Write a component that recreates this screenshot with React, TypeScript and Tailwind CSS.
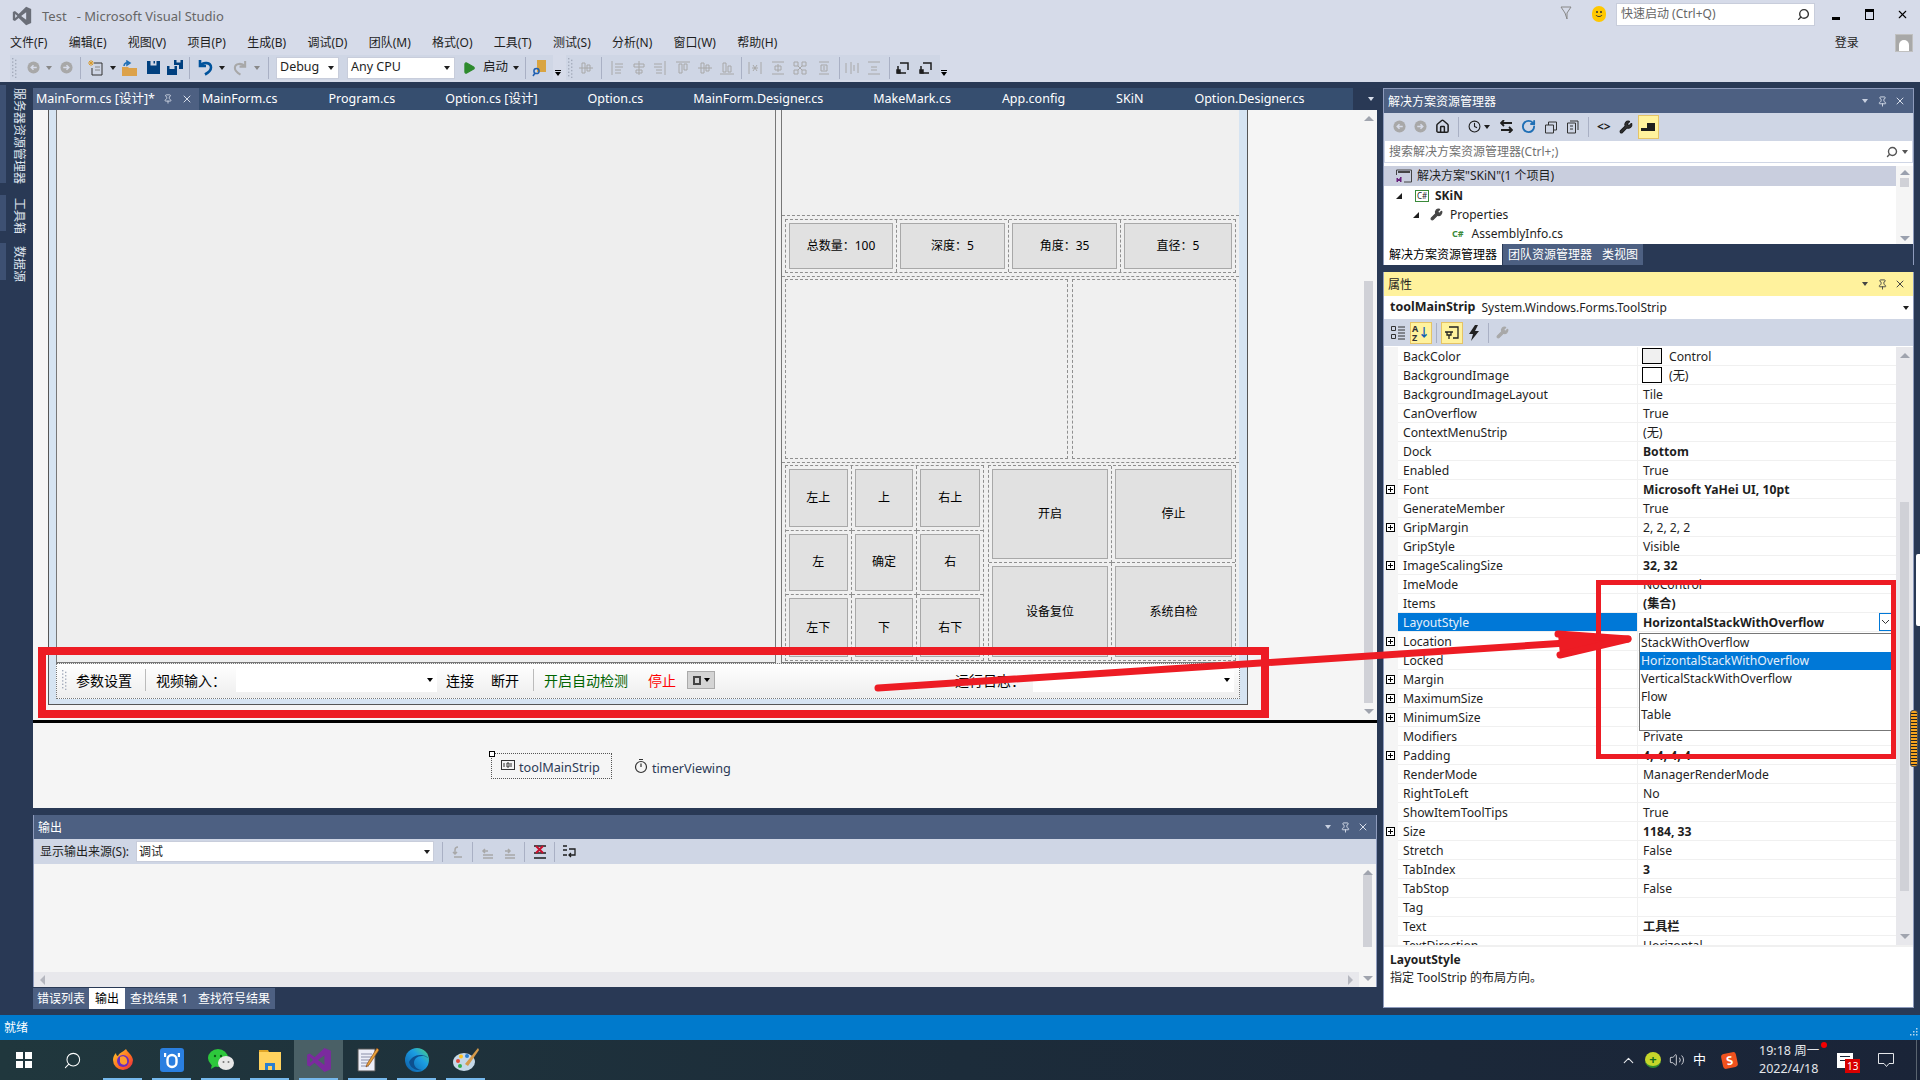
import React from "react";
import { Search, ChevronUp, Volume2, Home, Wrench, RotateCw, Clock, Play, Pin, X } from "lucide-react";

const Tri = ({ c = "border-t-[#1e1e1e]" }: { c?: string }) => (
  <span className={`inline-block w-0 h-0 border-x-[3px] border-x-transparent border-t-[4px] ${c}`} />
);

const VsLogo = ({ fill, size }: { fill: string; size: number }) => (
  <svg width={size} height={size} viewBox="0 0 24 24">
    <path fillRule="evenodd" fill={fill} d="M17 1 L8 9.5 L3.5 6 L1 7.2 V16.8 L3.5 18 L8 14.5 L17 23 L23 20.5 V3.5 Z M17 7.5 V16.5 L11 12 Z M3.8 9.5 L6.5 12 L3.8 14.5 Z" />
  </svg>
);

const Circ = ({ dir, c = "#a8a8a8" }: { dir: "l" | "r"; c?: string }) => (
  <svg width="13" height="13" viewBox="0 0 14 14">
    <circle cx="7" cy="7" r="6.5" fill={c} />
    <path d={dir === "l" ? "M10.5 7H5M7 4.5 4.5 7 7 9.5" : "M3.5 7H9M7 4.5 9.5 7 7 9.5"} stroke="#d6dbe9" strokeWidth="1.6" fill="none" />
  </svg>
);

const Grip = () => (
  <svg width="5" height="20" viewBox="0 0 5 20" fill="#a4abbb">
    {[0, 1, 2, 3, 4, 5].map((i) => (
      <g key={i}>
        <rect x="0" y={i * 3.4} width="1.4" height="1.4" />
        <rect x="3" y={i * 3.4 + 1.7} width="1.4" height="1.4" />
      </g>
    ))}
  </svg>
);

const Div = () => <span className="w-px h-[22px] bg-[#a9b0c4]" />;

const Cell = ({ w, children }: { w: string; children?: React.ReactNode }) => (
  <span className={`${w} h-full flex items-center justify-center shrink-0`}>{children}</span>
);

const Floppy = () => (
  <svg width="13" height="13" viewBox="0 0 13 13">
    <path fillRule="evenodd" fill="#00407f" d="M0 0h13v13H0zM3.5 0v4.500h6V0h-1.500v2.500H6.500V0z" />
  </svg>
);

const FloppyAll = () => (
  <svg width="16" height="15" viewBox="0 0 16 15">
    <path fillRule="evenodd" fill="#00407f" d="M7 0h9v9h-4V5H7zM9.500 0v2.500h4V0zM0 6h10v9H0zM2.500 6v3h5V6z" />
  </svg>
);

const Align = ({ v }: { v: number }) => (
  <svg width="16" height="16" viewBox="0 0 16 16" stroke="#a8a8a8" strokeWidth="1" fill="none">
    {v === 0 && <path d="M3 1v14M6 4h8M6 7h8M6 10h6M6 13h6" />}
    {v === 1 && <path d="M8 1v14M3 4h10v3H3zM5 10h6v3H5z" />}
    {v === 2 && <path d="M13 1v14M2 4h8M2 7h8M4 10h6M4 13h6" />}
    {v === 3 && <path d="M1 2h14M4 4v9h3V4zM9 4v6h3V4z" />}
    {v === 4 && <path d="M1 8h14M4 3v10h3V3zM9 5v6h3V5z" />}
    {v === 5 && <path d="M1 14h14M4 3v9h3V3zM9 6v6h3V6z" />}
    {v === 6 && <path d="M2 2v12M14 2v12M5 8h6M6 5l4 6M10 5l-4 6" />}
    {v === 7 && <path d="M2 2h12M2 14h12M8 4v8M5 6h6v4H5z" />}
    {v === 8 && <path d="M2 2h4v4H2zM10 2h4v4h-4zM2 10h4v4H2zM10 10h4v4h-4zM6 6l4 4M10 6l-4 4" />}
    {v === 9 && <path d="M3 2h10M3 14h10M5 5h6v6H5zM8 6v4" />}
    {v === 10 && <path d="M2 3v10M14 3v10M7 2v12M10 5v6" />}
    {v === 11 && <path d="M2 2h12M2 14h12M5 7h6M5 10h6" />}
  </svg>
);

const Overflow = () => (
  <span className="mt-[16px] flex flex-col items-center gap-px">
    <span className="w-[6px] h-px bg-black" />
    <Tri c="border-t-black" />
  </span>
);

const TopBar = () => (
  <div className="h-[82px] bg-[#d6dbe9] flex flex-col shrink-0">
    <div className="h-[32px] flex items-center">
      <span className="ml-[12px]">
        <VsLogo fill="#6a6e78" size={20} />
      </span>
      <span className="ml-[10px] mt-px text-[13px] text-[#666] whitespace-pre">Test   - Microsoft Visual Studio</span>
      <div className="ml-auto flex items-center -mt-[4px]">
        <svg width="12" height="14" viewBox="0 0 12 14" fill="none" stroke="#888" className="-mt-[3px]">
          <path d="M1 1h10L7 7v6L5 7z" />
        </svg>
        <span className="ml-[20px] w-[14px] h-[16px] rounded-full bg-[#ffc800] flex items-center justify-center">
          <svg width="10" height="10" viewBox="0 0 10 10" fill="none" stroke="#333">
            <circle cx="3" cy="3" r=".6" fill="#333" />
            <circle cx="7" cy="3" r=".6" fill="#333" />
            <path d="M2 6c1 2 5 2 6 0" />
          </svg>
        </span>
        <div className="ml-[10px] w-[199px] h-[23px] bg-white border border-[#c8cddb] flex items-center text-[12px] text-[#666] pl-[4px] pr-[4px]">
          <span>快速启动 (Ctrl+Q)</span>
          <Search size={13} strokeWidth={2.6} className="ml-auto -scale-x-100 text-[#333]" />
        </div>
        <span className="ml-[17px] w-[8px] h-[3px] mt-[8px] bg-black" />
        <span className="ml-[25px] w-[9px] h-[11px] border border-black border-t-[3px]" />
        <X size={13} strokeWidth={2} className="ml-[22px] mr-[11px] text-black" />
      </div>
    </div>
    <div className="h-[22px] flex items-center pl-[10px] gap-[21.25px] text-[12px] text-[#1e1e1e]">
      <span>文件(F)</span>
      <span>编辑(E)</span>
      <span>视图(V)</span>
      <span>项目(P)</span>
      <span>生成(B)</span>
      <span>调试(D)</span>
      <span>团队(M)</span>
      <span>格式(O)</span>
      <span>工具(T)</span>
      <span>测试(S)</span>
      <span>分析(N)</span>
      <span>窗口(W)</span>
      <span>帮助(H)</span>
      <span className="ml-auto mr-[15px]">登录</span>
      <span className="mr-[7px] w-[18px] h-[18px] bg-[#a8a8a8] flex items-end justify-center border border-[#c0c0c0]">
        <span className="w-[10px] h-[11px] bg-white rounded-t-[5px]" />
      </span>
    </div>
    <div className="h-[28px] flex items-start">
      <div className="ml-[10px] w-[543px] h-[25px] mt-px bg-[#cfd6e5] flex items-center overflow-hidden">
        <Cell w="w-[8px]"><Grip /></Cell>
        <span className="w-[7px] shrink-0" />
        <Cell w="w-[16px]"><Circ dir="l" /></Cell>
        <Cell w="w-[16px]"><Tri c="border-t-[#888]" /></Cell>
        <Cell w="w-[18px]"><Circ dir="r" /></Cell>
        <Cell w="w-[10px]"><Div /></Cell>
        <Cell w="w-[22px]">
          <svg width="16" height="16" viewBox="0 0 16 16" fill="none">
            <path d="M6 3h8v12H4V8" stroke="#333" />
            <path d="M3 0v6M0 3h6M1 1l4 4M5 1 1 5" stroke="#d99a2b" strokeWidth="1" />
            <path d="M7 7h5M7 10h5" stroke="#888" />
          </svg>
        </Cell>
        <Cell w="w-[12px]"><Tri /></Cell>
        <Cell w="w-[22px]">
          <svg width="16" height="16" viewBox="0 0 16 16">
            <path d="M0 7h6l1 1h8v8H0z" fill="#dca24a" />
            <path d="M2 6c0-3 3-4 5-3M5 1l3 2-3 2z" fill="none" stroke="#1f6fb5" strokeWidth="1.5" />
          </svg>
        </Cell>
        <Cell w="w-[24px]"><Floppy /></Cell>
        <Cell w="w-[20px]"><FloppyAll /></Cell>
        <Cell w="w-[8px]"><Div /></Cell>
        <Cell w="w-[24px]">
          <svg width="15" height="17" viewBox="0 0 15 17" fill="none" stroke="#00539c" strokeWidth="2.6">
            <path d="M2 1v6h6M2.5 6.5C5 3 13 3 13 8.5c0 3-2.500 5-6 7" />
          </svg>
        </Cell>
        <Cell w="w-[10px]"><Tri /></Cell>
        <Cell w="w-[26px]">
          <svg width="14" height="16" viewBox="0 0 15 17" fill="none" stroke="#a8a8a8" strokeWidth="2.2">
            <path d="M13 1v6H7M12.500 6.500C10 3 2 3 2 8.500c0 3 2.500 5 6 7" />
          </svg>
        </Cell>
        <Cell w="w-[8px]"><Tri c="border-t-[#888]" /></Cell>
        <Cell w="w-[14px]"><Div /></Cell>
        <div className="ml-px w-[63px] h-[22px] shrink-0 bg-white border border-[#c8cddb] flex items-center pl-[3px] pr-[4px] text-[12.5px] text-[#1e1e1e]">
          Debug<span className="ml-auto flex"><Tri /></span>
        </div>
        <div className="ml-[8px] w-[108px] h-[22px] shrink-0 bg-white border border-[#c8cddb] flex items-center pl-[3px] pr-[4px] text-[12.5px] text-[#1e1e1e]">
          Any CPU<span className="ml-auto flex"><Tri /></span>
        </div>
        <Cell w="w-[28px]"><Play size={14} fill="#2d8a2d" className="text-[#2d8a2d]" /></Cell>
        <span className="w-[25px] shrink-0 text-[12.5px] text-[#1e1e1e] whitespace-nowrap">启动</span>
        <Cell w="w-[16px]"><Tri /></Cell>
        <Cell w="w-[2px]"><Div /></Cell>
        <Cell w="w-[27px]">
          <svg width="16" height="18" viewBox="0 0 16 18">
            <path d="M5 1h9v12H5z" fill="#d9a441" />
            <circle cx="4.500" cy="12" r="2.600" fill="none" stroke="#1f5fb0" strokeWidth="1.500" />
            <path d="M3 14l-2 3" stroke="#1f5fb0" strokeWidth="1.500" />
          </svg>
        </Cell>
      </div>
      <span className="ml-[2px]"><Overflow /></span>
      <div className="ml-[5px] w-[374px] h-[25px] mt-px bg-[#cfd6e5] flex items-center overflow-hidden">
        <Cell w="w-[8px]"><Grip /></Cell>
        <Cell w="w-[24px]"><Align v={4} /></Cell>
        <Cell w="w-[6px]"><Div /></Cell>
        <Cell w="w-[26px]"><Align v={0} /></Cell>
        <Cell w="w-[18px]"><Align v={1} /></Cell>
        <Cell w="w-[24px]"><Align v={2} /></Cell>
        <Cell w="w-[22px]"><Align v={3} /></Cell>
        <Cell w="w-[22px]"><Align v={4} /></Cell>
        <Cell w="w-[22px]"><Align v={5} /></Cell>
        <Cell w="w-[6px]"><Div /></Cell>
        <Cell w="w-[22px]"><Align v={6} /></Cell>
        <Cell w="w-[24px]"><Align v={7} /></Cell>
        <Cell w="w-[20px]"><Align v={8} /></Cell>
        <Cell w="w-[28px]"><Align v={9} /></Cell>
        <Cell w="w-[2px]"><Div /></Cell>
        <Cell w="w-[24px]"><Align v={10} /></Cell>
        <Cell w="w-[20px]"><Align v={11} /></Cell>
        <Cell w="w-[10px]"><Div /></Cell>
        {["w-[18px]", "w-[28px]"].map((w) => (
          <Cell key={w} w={w}>
            <svg width="16" height="16" viewBox="0 0 16 16" fill="none" stroke="#1e1e1e" strokeWidth="1.5">
              <path d="M3 6V13H11M5 3H13V10" />
              <rect x="2" y="10" width="3" height="3" fill="#1e1e1e" />
            </svg>
          </Cell>
        ))}
      </div>
      <span className="ml-px"><Overflow /></span>
    </div>
  </div>
);

const PanelHead = ({ title, light }: { title: string; light?: boolean }) => (
  <div className={`h-[24px] shrink-0 flex items-center pl-[4px] text-[12px] ${light ? "bg-[#fff29d] text-[#1e1e1e]" : "bg-[#4d6082] text-white"}`}>
    <span className="mt-px">{title}</span>
    <span className="ml-auto flex">
      <Tri c={light ? "border-t-[#444]" : "border-t-[#c8d0e0]"} />
    </span>
    <Pin size={11} className={`ml-[9px] ${light ? "text-[#444]" : "text-[#d8deea]"}`} />
    <X size={12} className={`ml-[6px] mr-[7px] ${light ? "text-[#444]" : "text-[#d8deea]"}`} />
  </div>
);

const VScroll = ({ thumb, bg = "bg-[#f5f5f5]" }: { thumb?: string; bg?: string }) => (
  <div className={`w-[17px] shrink-0 ${bg} flex flex-col items-center pt-[6px] pb-[6px]`}>
    <span className="w-0 h-0 border-x-[5px] border-x-transparent border-b-[5px] border-b-[#a0a4ae]" />
    {thumb ? <span className={`w-[9px] bg-[#d0d1d7] ${thumb}`} /> : null}
    <span className="mt-auto w-0 h-0 border-x-[5px] border-x-transparent border-t-[5px] border-t-[#a0a4ae]" />
  </div>
);

const Btn = ({ children, className = "" }: { children?: React.ReactNode; className?: string }) => (
  <div className={`bg-[#e1e1e1] border border-[#a8a8a8] flex items-center justify-center text-[12px] text-black h-full ${className}`}>{children}</div>
);

const DCell = ({ children, className = "" }: { children?: React.ReactNode; className?: string }) => (
  <div className={`border-dashed border-[#8f8f8f] p-[3px] ${className}`}>{children}</div>
);

const ToolStrip = () => (
  <div className="h-[36px] shrink-0 bg-gradient-to-b from-white to-[#eeeeee] border border-dotted border-[#777] flex items-center pb-[2px] text-[14px] text-black">
    <span className="ml-[5px]"><Grip /></span>
    <span className="ml-[9px]">参数设置</span>
    <span className="ml-[13px] w-px h-[22px] bg-[#bbb]" />
    <span className="ml-[10px]">视频输入：</span>
    <div className="ml-[10px] w-[201px] h-[24px] bg-white flex items-center justify-end pr-[4px]"><Tri c="border-t-black" /></div>
    <span className="ml-[9px]">连接</span>
    <span className="ml-[17px]">断开</span>
    <span className="ml-[14px] w-px h-[22px] bg-[#bbb]" />
    <span className="ml-[10px] text-[#006400]">开启自动检测</span>
    <span className="ml-[20px] text-[#ff0000]">停止</span>
    <div className="ml-[11px] w-[28px] h-[18px] bg-[#d4d4d4] border border-[#aaa] flex items-center justify-center gap-[3px]">
      <span className="w-[8px] h-[9px] border-2 border-[#444]" />
      <Tri c="border-t-black" />
    </div>
    <span className="ml-[240px]">运行日志：</span>
    <div className="ml-[8px] w-[201px] h-[24px] bg-white flex items-center justify-end pr-[4px]"><Tri c="border-t-black" /></div>
  </div>
);

const FormRight = () => (
  <div className="w-[458px] h-full border-l border-b border-[#777] bg-[#f0f0f0] flex flex-col">
    <div className="h-[106px] border-b border-dashed border-[#8f8f8f]" />
    <div className="mt-[3px] mx-[3px] h-[54px] grid grid-cols-[111px_112px_112px_1fr] border border-dashed border-[#8f8f8f]">
      <DCell className="border-r"><Btn>总数量：100</Btn></DCell>
      <DCell className="border-r"><Btn>深度：5</Btn></DCell>
      <DCell className="border-r"><Btn>角度：35</Btn></DCell>
      <DCell><Btn>直径：5</Btn></DCell>
    </div>
    <div className="mt-[3px] border-t border-dashed border-[#8f8f8f]" />
    <div className="mt-[2px] mx-[3px] h-[180px] flex gap-[4px]">
      <div className="w-[283px] border border-dashed border-[#8f8f8f]" />
      <div className="flex-1 border border-dashed border-[#8f8f8f]" />
    </div>
    <div className="mt-[3px] border-t border-dashed border-[#8f8f8f]" />
    <div className="mt-[2px] mx-[3px] h-[196px] flex gap-[4px]">
      <div className="w-[199px] grid grid-cols-3 grid-rows-3 border border-dashed border-[#8f8f8f]">
        {["左上", "上", "右上", "左", "确定", "右", "左下", "下", "右下"].map((t, i) => (
          <DCell key={t} className={`${i % 3 < 2 ? "border-r" : ""} ${i < 6 ? "border-b" : ""}`}>
            <Btn>{t}</Btn>
          </DCell>
        ))}
      </div>
      <div className="flex-1 grid grid-cols-2 grid-rows-2 border border-dashed border-[#8f8f8f]">
        <DCell className="border-r border-b"><Btn>开启</Btn></DCell>
        <DCell className="border-b"><Btn>停止</Btn></DCell>
        <DCell className="border-r"><Btn>设备复位</Btn></DCell>
        <DCell><Btn>系统自检</Btn></DCell>
      </div>
    </div>
  </div>
);

const Designer = () => (
  <div className="h-[698px] shrink-0 bg-[#f5f5f5] flex flex-col">
    <div className="h-[610px] flex shrink-0 overflow-hidden">
      <div className="flex-1 pl-[15px]">
        <div className="w-[1200px] h-[595px] bg-[#d6e4f2] border-x border-b border-[#555] px-[7px] pb-[5px] flex flex-col">
          <div className="h-[553px] flex shrink-0">
            <div className="w-[720px] h-full bg-[#eeeeee] border-x border-b border-[#777]" />
            <div className="w-[5px] bg-[#f0f0f0]" />
            <FormRight />
          </div>
          <ToolStrip />
        </div>
      </div>
      <VScroll thumb="h-[422px] mt-[160px]" />
    </div>
    <div className="h-[3px] bg-black shrink-0" />
    <div className="flex-1 flex items-start pt-[30px] pl-[458px] text-[12.7px] text-[#2c3a55]">
      <div className="relative w-[121px] h-[26px] border border-dotted border-[#555] flex items-center pl-[9px] gap-[4px]">
        <span className="absolute -left-[3px] -top-[3px] w-[6px] h-[6px] bg-white border border-black" />
        <svg width="14" height="12" viewBox="0 0 14 12" fill="none" stroke="#333" className="-mt-[3px]">
          <rect x=".5" y="1.500" width="13" height="9" />
          <path d="M3 4v4M6 4h2v4H6zM10 4v4" />
        </svg>
        <span className="mt-[3px]">toolMainStrip</span>
      </div>
      <div className="ml-[22px] mt-[3px] flex items-center gap-[4px]">
        <svg width="14" height="16" viewBox="0 0 14 16" fill="none" stroke="#333" strokeWidth="1.200" className="-mt-[3px]">
          <circle cx="7" cy="9" r="5.500" />
          <path d="M7 5.500V9M5 1.500h4" />
        </svg>
        <span className="mt-[3px]">timerViewing</span>
      </div>
    </div>
  </div>
);

const OutIcon = ({ children }: { children: React.ReactNode }) => (
  <svg width="16" height="16" viewBox="0 0 16 16" fill="none" stroke="#a8a8a8" strokeWidth="1.500">{children}</svg>
);

const Output = () => (
  <div className="h-[172px] shrink-0 flex flex-col border-x border-[#8e9bbc]">
    <PanelHead title="输出" />
    <div className="h-[25px] shrink-0 bg-[#cfd6e5] flex items-center pl-[6px] text-[12px] text-[#1e1e1e]">
      <span>显示输出来源(S):</span>
      <div className="ml-[7px] w-[298px] h-[21px] bg-white border border-[#c8cddb] flex items-center pl-[2px] pr-[3px]">
        调试<span className="ml-auto flex"><Tri /></span>
      </div>
      <span className="ml-[8px] w-px h-[20px] bg-[#a9b0c4]" />
      <span className="ml-[7px]"><OutIcon><path d="M4 13h8M8 3a3 3 0 0 0-3 3v4M3 8l2 2 2-2" /></OutIcon></span>
      <span className="ml-[6px] w-px h-[20px] bg-[#a9b0c4]" />
      <span className="ml-[7px]"><OutIcon><path d="M3 11h10M3 14h10M8 7H3M5 5 3 7l2 2" /></OutIcon></span>
      <span className="ml-[6px]"><OutIcon><path d="M3 11h10M3 14h10M3 7h5M6 5l2 2-2 2" /></OutIcon></span>
      <span className="ml-[6px] w-px h-[20px] bg-[#a9b0c4]" />
      <span className="ml-[7px]">
        <svg width="16" height="16" viewBox="0 0 16 16" fill="none" strokeWidth="1.600">
          <path d="M2 2h12M2 9h12M2 14h12" stroke="#1e1e1e" />
          <path d="M4 2l7 7M11 2 4 9" stroke="#c8102e" strokeWidth="2" />
        </svg>
      </span>
      <span className="ml-[6px] w-px h-[20px] bg-[#a9b0c4]" />
      <span className="ml-[6px]">
        <svg width="16" height="16" viewBox="0 0 16 16" fill="none" stroke="#1e1e1e" strokeWidth="1.300">
          <path d="M2 2h4M2 6h4M2 11h4M8 5h6v6H8M10 9l-2 2 2 2" />
        </svg>
      </span>
    </div>
    <div className="flex-1 bg-[#f5f5f5] flex min-h-0">
      <div className="flex-1 flex flex-col">
        <div className="flex-1" />
        <div className="h-[15px] bg-[#e8e8ec] flex items-center px-[6px]">
          <span className="w-0 h-0 border-y-[5px] border-y-transparent border-r-[5px] border-r-[#b5b7bf]" />
          <span className="ml-auto w-0 h-0 border-y-[5px] border-y-transparent border-l-[5px] border-l-[#b5b7bf]" />
        </div>
      </div>
      <VScroll thumb="h-[72px]" />
    </div>
  </div>
);

const SubTab = ({ children, active, px = "px-[5px]" }: { children: React.ReactNode; active?: boolean; px?: string }) => (
  <span className={`h-full flex items-center ${px} text-[12px] whitespace-nowrap ${active ? "bg-white text-black" : "text-white"}`}>{children}</span>
);

const Explorer = () => (
  <div className="h-[177px] shrink-0 flex flex-col border-x border-t border-[#8e9bbc] bg-[#293955]">
    <PanelHead title="解决方案资源管理器" />
    <div className="h-[27px] shrink-0 bg-[#cfd6e5] flex items-center pl-[9px] gap-[8px] text-[#1e1e1e]">
      <Circ dir="l" />
      <Circ dir="r" />
      <Home size={15} strokeWidth={2.4} />
      <span className="w-px h-[20px] bg-[#a9b0c4]" />
      <Clock size={13} className="ml-px" />
      <span className="-ml-[5px] flex"><Tri /></span>
      <svg width="13" height="13" viewBox="0 0 13 13" fill="none" stroke="#1e1e1e" strokeWidth="1.800" className="ml-[2px]">
        <path d="M4 0 1 3l3 3M1 3h11M9 7l3 3-3 3M12 10H1" />
      </svg>
      <RotateCw size={15} strokeWidth={3} className="text-[#1f6fb5]" />
      <svg width="14" height="14" viewBox="0 0 14 14" fill="none" stroke="#333"><path d="M1.500 5h8v8h-8zM4.500 5V2h8v8h-3" /></svg>
      <svg width="14" height="14" viewBox="0 0 14 14" fill="none" stroke="#333"><path d="M1.500 3h8v10h-8zM4 1h8v9M4 6h3M4 9h3" /></svg>
      <span className="w-px h-[20px] bg-[#a9b0c4]" />
      <span className="text-[12px] font-bold">&lt;&gt;</span>
      <Wrench size={14} fill="#333" />
      <span className="-ml-[3px] w-[21px] h-[24px] bg-[#fff29d] border border-[#e5c365] flex items-center justify-center">
        <svg width="14" height="8" viewBox="0 0 14 8"><path d="M0 5h14v3H0zM6 0h8v5H6z" fill="#1e1e1e" /></svg>
      </span>
    </div>
    <div className="h-[23px] shrink-0 bg-white border border-[#cfd6e5] flex items-center pl-[4px] pr-[4px] text-[12px] text-[#717171]">
      搜索解决方案资源管理器(Ctrl+;)
      <Search size={12} strokeWidth={2.8} className="ml-auto -scale-x-100 text-[#555]" />
      <span className="ml-[4px] flex"><Tri c="border-t-[#555]" /></span>
    </div>
    <div className="h-[81px] shrink-0 bg-white flex text-[12px] text-[#1e1e1e] overflow-hidden pt-[3px]">
      <div className="flex-1 flex flex-col">
        <div className="h-[20px] bg-[#c9cede] flex items-center pl-[12px] gap-[5px]">
          <svg width="16" height="15" viewBox="0 0 16 15" fill="none" stroke="#444"><path d="M.5 1h15v12H8M.5 1v5" /><path d="M2 3h12" strokeWidth="2" /><path d="M1 9l2 2 2-3v5l-2-2-2 2z" fill="#68217a" stroke="#68217a" /></svg>
          <span>解决方案"SKiN"(1 个项目)</span>
        </div>
        <div className="h-[19px] flex items-center pl-[12px]">
          <span className="w-0 h-0 border-l-[6px] border-l-transparent border-b-[6px] border-b-[#1e1e1e]" />
          <span className="ml-[13px] w-[14px] h-[12px] border border-[#3a8a3a] text-[8px] leading-[10px] text-center">C#</span>
          <span className="ml-[6px] font-bold">SKiN</span>
        </div>
        <div className="h-[19px] flex items-center pl-[29px]">
          <span className="w-0 h-0 border-l-[6px] border-l-transparent border-b-[6px] border-b-[#1e1e1e]" />
          <Wrench size={13} fill="#444" className="ml-[11px] text-[#444]" />
          <span className="ml-[7px]">Properties</span>
        </div>
        <div className="h-[19px] flex items-center pl-[68px]">
          <span className="text-[9px] font-bold text-[#3a8a3a]">C#</span>
          <span className="ml-[8px]">AssemblyInfo.cs</span>
        </div>
      </div>
      <div className="w-[17px] flex flex-col items-center pt-[4px] pb-[3px] bg-[#f5f5f5]">
        <span className="w-0 h-0 border-x-[5px] border-x-transparent border-b-[5px] border-b-[#9aa0ae]" />
        <span className="w-[9px] h-[9px] mt-[3px] bg-[#d0d1d7]" />
        <span className="mt-auto w-0 h-0 border-x-[5px] border-x-transparent border-t-[5px] border-t-[#9aa0ae]" />
      </div>
    </div>
    <div className="flex-1 flex items-stretch">
      <SubTab active>解决方案资源管理器</SubTab>
      <div className="ml-px flex bg-[#4d6082] h-[21px]">
        <SubTab>团队资源管理器</SubTab>
        <SubTab>类视图</SubTab>
      </div>
    </div>
  </div>
);

type Row = { n: string; v?: string; b?: boolean; p?: boolean; sel?: boolean; sw?: string };
const rows: Row[] = [
  { n: "BackColor", v: "Control", sw: "bg-[#f0f0f0]" },
  { n: "BackgroundImage", v: "(无)", sw: "bg-white" },
  { n: "BackgroundImageLayout", v: "Tile" },
  { n: "CanOverflow", v: "True" },
  { n: "ContextMenuStrip", v: "(无)" },
  { n: "Dock", v: "Bottom", b: true },
  { n: "Enabled", v: "True" },
  { n: "Font", v: "Microsoft YaHei UI, 10pt", b: true, p: true },
  { n: "GenerateMember", v: "True" },
  { n: "GripMargin", v: "2, 2, 2, 2", p: true },
  { n: "GripStyle", v: "Visible" },
  { n: "ImageScalingSize", v: "32, 32", b: true, p: true },
  { n: "ImeMode", v: "NoControl" },
  { n: "Items", v: "(集合)", b: true },
  { n: "LayoutStyle", v: "HorizontalStackWithOverflow", b: true, sel: true },
  { n: "Location", p: true },
  { n: "Locked" },
  { n: "Margin", p: true },
  { n: "MaximumSize", p: true },
  { n: "MinimumSize", p: true },
  { n: "Modifiers", v: "Private" },
  { n: "Padding", v: "4, 4, 4, 4", b: true, p: true },
  { n: "RenderMode", v: "ManagerRenderMode" },
  { n: "RightToLeft", v: "No" },
  { n: "ShowItemToolTips", v: "True" },
  { n: "Size", v: "1184, 33", b: true, p: true },
  { n: "Stretch", v: "False" },
  { n: "TabIndex", v: "3", b: true },
  { n: "TabStop", v: "False" },
  { n: "Tag" },
  { n: "Text", v: "工具栏", b: true },
  { n: "TextDirection", v: "Horizontal" },
];

const Props = () => (
  <div className="flex-1 min-h-0 relative flex flex-col border-x border-b border-[#8e9bbc] bg-white">
    <PanelHead title="属性" light />
    <div className="h-[23px] shrink-0 flex items-center pl-[6px] pr-[4px] text-[12px] text-[#1e1e1e]">
      <b className="text-[12.5px]">toolMainStrip</b>
      <span className="ml-[6px]">System.Windows.Forms.ToolStrip</span>
      <span className="ml-auto flex"><Tri /></span>
    </div>
    <div className="h-[27px] shrink-0 bg-[#cfd6e5] flex items-center pl-[6px] gap-[4px]">
      <svg width="16" height="16" viewBox="0 0 16 16" fill="none" stroke="#333"><path d="M1.500 1.500h4v4h-4zM1.500 9.500h4v4h-4zM8 2h7M8 5h7M8 8h7M8 11h7M8 14h7" /></svg>
      <span className="w-[22px] h-[22px] bg-[#fff29d] border border-[#e5c365] flex items-center justify-center text-[9px] leading-[9px] font-bold text-[#333]">
        <span className="flex flex-col"><span>A</span><span>Z</span></span>
        <span className="text-[#0e5fb5] text-[12px]">↓</span>
      </span>
      <span className="w-px h-[20px] bg-[#a9b0c4]" />
      <span className="w-[22px] h-[22px] bg-[#fff29d] border border-[#e5c365] flex items-center justify-center">
        <svg width="16" height="16" viewBox="0 0 16 16" fill="none" stroke="#222" strokeWidth="1.300"><path d="M5 2h9v11H9M1 7h8M3 7v3h4V7M5 10v4" /></svg>
      </span>
      <svg width="14" height="16" viewBox="0 0 14 16"><path d="M8 0 2 9h4l-2 7 8-10H8l3-6z" fill="#222" /></svg>
      <span className="ml-[3px] w-px h-[20px] bg-[#a9b0c4]" />
      <Wrench size={13} fill="#a8a8a8" className="ml-[3px] text-[#a8a8a8]" />
    </div>
    <div className="h-[599px] shrink-0 flex overflow-hidden pt-px">
      <div className="flex-1 min-w-0 flex flex-col bg-white">
        {rows.map((r) => (
          <div key={r.n} className="h-[19px] shrink-0 flex text-[12.2px] leading-[20px] text-[#1e1e1e]">
            <div className="w-[14px] shrink-0 bg-[#f5f5f5] flex items-center justify-center">
              {r.p ? (
                <span className="w-[9px] h-[9px] mr-[1px] bg-white border border-black flex items-center justify-center relative">
                  <span className="absolute w-[5px] h-px bg-black" />
                  <span className="absolute w-px h-[5px] bg-black" />
                </span>
              ) : null}
            </div>
            <div className={`w-[240px] shrink-0 pl-[5px] border-b border-r border-[#f0f0f0] ${r.sel ? "bg-[#0078d7] text-[#e6f0fb]" : ""}`}>{r.n}</div>
            <div className={`flex-1 pl-[5px] flex items-start border-b border-[#f0f0f0] ${r.b ? "font-bold" : ""}`}>
              {r.sw ? <span className={`w-[20px] h-[16px] mt-px -ml-px border border-black mr-[7px] ${r.sw}`} /> : null}
              <span>{r.v}</span>
              {r.sel ? (
                <span className="ml-auto mr-[4px] w-[13px] h-[18px] bg-white border border-[#0078d7] flex items-center justify-center">
                  <svg width="9" height="6" viewBox="0 0 9 6" fill="none" stroke="#333"><path d="M1 1l3.500 3.500L8 1" /></svg>
                </span>
              ) : null}
            </div>
          </div>
        ))}
      </div>
      <VScroll bg="bg-[#e8e8ec]" thumb="h-[389px] mt-[144px]" />
    </div>
    <div className="flex-1 border-t-2 border-[#f0f0f0] pl-[6px] pt-[4px] text-[12px] text-[#1e1e1e]">
      <div className="font-bold">LayoutStyle</div>
      <div>指定 ToolStrip 的布局方向。</div>
    </div>
    <div className="absolute left-[255px] top-[361px] w-[253px] h-[98px] bg-white border border-[#777] text-[12.2px] text-[#1e1e1e]">
      <div className="h-[18px] leading-[18px] pl-[1px]">StackWithOverflow</div>
      <div className="h-[18px] leading-[18px] pl-[1px] bg-[#0078d7] text-[#e6f0fb]">HorizontalStackWithOverflow</div>
      <div className="h-[18px] leading-[18px] pl-[1px]">VerticalStackWithOverflow</div>
      <div className="h-[18px] leading-[18px] pl-[1px]">Flow</div>
      <div className="h-[18px] leading-[18px] pl-[1px]">Table</div>
    </div>
  </div>
);

const TaskSlot = ({ children, on, bar }: { children: React.ReactNode; on?: boolean; bar?: boolean }) => (
  <span className={`relative w-[49px] h-[40px] flex items-center justify-center shrink-0 ${on ? "bg-[#4a6066]" : ""}`}>
    {children}
    {bar ? <span className="absolute left-[5px] right-[5px] bottom-0 h-[2px] bg-[#76b9ed]" /> : null}
  </span>
);

const Taskbar = () => (
  <div className="h-[40px] shrink-0 bg-gradient-to-r from-[#20373d] via-[#1c2c3a] to-[#1a2438] flex items-center text-white">
    <span className="ml-[16px] w-[16px] h-[16px] grid grid-cols-2 gap-[2px]">
      <span className="bg-white" /><span className="bg-white" /><span className="bg-white" /><span className="bg-white" />
    </span>
    <Search size={19} strokeWidth={1.3} className="ml-[31px] -scale-x-100" />
    <span className="ml-[16px] flex">
      <TaskSlot bar>
        <svg width="24" height="24" viewBox="0 0 24 24">
          <defs><linearGradient id="ff" x1="0" y1="0" x2="1" y2="1"><stop offset="0" stopColor="#ffcb2e" /><stop offset=".6" stopColor="#ff6a1f" /><stop offset="1" stopColor="#e3224f" /></linearGradient></defs>
          <path d="M15 1c1 3 6 5 7 11a10 10 0 1 1-20 0c0-3 1-5 3-7 0 2 1 3 2 3 1-3 5-4 8-7z" fill="url(#ff)" />
          <circle cx="12" cy="13" r="6" fill="#6a2bc0" />
          <path d="M9 9c4-2 8 1 7 6-2 3-6 2-7-1z" fill="#ff9d2e" />
        </svg>
      </TaskSlot>
      <TaskSlot bar>
        <span className="w-[24px] h-[24px] rounded-[3px] bg-[#2a7fe0] flex items-center justify-center">
          <svg width="16" height="18" viewBox="0 0 16 18" fill="none" stroke="#fff" strokeWidth="2.400"><path d="M1 2v4M15 2v4" /><rect x="3.500" y="4" width="9" height="12" rx="4.500" /></svg>
        </span>
      </TaskSlot>
      <TaskSlot bar>
        <svg width="26" height="24" viewBox="0 0 26 24">
          <ellipse cx="10" cy="10" rx="10" ry="9" fill="#2dc83c" />
          <path d="M4 16l-1 5 5-3z" fill="#2dc83c" />
          <ellipse cx="18" cy="15" rx="8" ry="7" fill="#e8e8e8" />
          <circle cx="7" cy="8" r="1.200" fill="#0c5e16" /><circle cx="13" cy="8" r="1.200" fill="#0c5e16" />
          <circle cx="15.500" cy="14" r="1" fill="#777" /><circle cx="20.500" cy="14" r="1" fill="#777" />
        </svg>
      </TaskSlot>
      <TaskSlot bar>
        <svg width="24" height="22" viewBox="0 0 24 22">
          <path d="M1 1h9l1 2H1z" fill="#e0a526" />
          <path d="M1 3h22v18H1z" fill="#ffd25e" />
          <path d="M7 14h10v7H7z" fill="#2a7fd0" />
          <path d="M10 17h4v4h-4z" fill="#ffd25e" />
        </svg>
      </TaskSlot>
      <TaskSlot on bar><VsLogo fill="#7b2a9e" size={26} /></TaskSlot>
      <TaskSlot bar>
        <svg width="22" height="26" viewBox="0 0 22 26">
          <path d="M1 2h17v22H1z" fill="#eceef8" stroke="#555" />
          <path d="M4 7h11M4 10h11M4 13h11M4 16h8M4 19h8" stroke="#8a8fa8" />
          <path d="M20 1 10 17l-1 3 3-2L22 3z" fill="#e8a23a" stroke="#7a3a10" strokeWidth=".6" />
        </svg>
      </TaskSlot>
      <TaskSlot bar>
        <svg width="26" height="26" viewBox="0 0 26 26">
          <defs><linearGradient id="ed" x1="0" y1="1" x2="1" y2="0"><stop offset="0" stopColor="#0c59a4" /><stop offset=".6" stopColor="#1b9de2" /><stop offset="1" stopColor="#52d77a" /></linearGradient></defs>
          <circle cx="13" cy="13" r="12" fill="url(#ed)" />
          <path d="M25 14c0-3-3-5-7-5-5 0-8 3-8 7 0 4 4 7 8 7-6 1-12-2-13-8 2-4 6-7 11-7 5 0 9 2 9 6z" fill="#0d4f8f" />
        </svg>
      </TaskSlot>
      <TaskSlot bar>
        <svg width="28" height="26" viewBox="0 0 28 26">
          <ellipse cx="12" cy="15" rx="11" ry="9" fill="#c5d8e8" />
          <circle cx="6" cy="14" r="2" fill="#e04a3a" /><circle cx="9" cy="9.500" r="2" fill="#ffc21e" /><circle cx="8" cy="19" r="2" fill="#2fae4e" /><circle cx="15" cy="9" r="2" fill="#2a7fd0" />
          <path d="M26 1 13 17l3 2L27 3z" fill="#d59a4a" />
        </svg>
      </TaskSlot>
    </span>
    <ChevronUp size={17} strokeWidth={1.6} className="ml-[1130px] text-[#e4e6ea]" />
    <span className="ml-[8px] w-[16px] h-[16px] rounded-full bg-[#c6d62a] border-b-2 border-[#2f8a2f] flex items-center justify-center text-[#126b1f] text-[13px] leading-none font-bold">+</span>
    <Volume2 size={16} strokeWidth={1.3} className="ml-[8px] text-[#e4e6ea]" />
    <span className="ml-[8px] text-[13px] text-white">中</span>
    <span className="ml-[16px] w-[15px] h-[15px] rounded-[3px] bg-[#f0521e] flex items-center justify-center text-[12px] font-bold text-white -rotate-12">S</span>
    <div className="ml-[22px] relative flex flex-col text-[12.5px] leading-[18px] text-[#e4e6ea] whitespace-nowrap">
      <span>19:18 周一</span>
      <span>2022/4/18</span>
      <span className="absolute left-[62px] top-[0px] w-[6px] h-[6px] rounded-full bg-[#f50000]" />
    </div>
    <span className="ml-[18px] relative w-[16px] h-[15px] bg-white">
      <span className="absolute left-[3px] top-[3px] w-[10px] h-px bg-[#1a2438]" />
      <span className="absolute left-[3px] top-[7px] w-[10px] h-px bg-[#1a2438]" />
      <span className="absolute left-[8px] top-[6px] w-[15px] h-[14px] bg-[#d80000] text-[10px] leading-[14px] text-white text-center">13</span>
    </span>
    <svg width="16" height="16" viewBox="0 0 16 16" fill="none" stroke="#e4e6ea" className="ml-[25px]">
      <path d="M.5 1.500h15v10H11l-2.500 3-2.500-3H.5z" />
    </svg>
    <span className="ml-auto mr-[3px] w-px h-[40px] bg-[#5a6470]" />
  </div>
);

const SideTab = ({ h, children }: { h: string; children: string }) => (
  <div className={`flex gap-[6px] ${h}`}>
    <span className="w-[6px] h-full bg-[#3d5072]" />
    <span className="w-[14px] pt-[3px] text-[12px] leading-[14px] text-[#dfe4ee] [writing-mode:vertical-rl] [text-orientation:sideways] whitespace-nowrap">{children}</span>
  </div>
);

export default function App() {
  const tabs: [string, string][] = [
    ["MainForm.cs", "pl-[3px] pr-[26px]"],
    ["Program.cs", "px-[25px]"],
    ["Option.cs [设计]", "px-[25px]"],
    ["Option.cs", "px-[25px]"],
    ["MainForm.Designer.cs", "px-[25px]"],
    ["MakeMark.cs", "px-[25px]"],
    ["App.config", "px-[26px]"],
    ["SKiN", "px-[25px]"],
    ["Option.Designer.cs", "px-[26px]"],
  ];
  return (
    <div className="relative w-[1920px] h-[1080px] overflow-hidden flex flex-col bg-[#293955] font-['Noto_Sans','Noto_Sans_CJK_SC',sans-serif]">
      <TopBar />
      <div className="h-[933px] shrink-0 flex">
        <div className="w-[33px] shrink-0 pt-[3px] flex flex-col gap-[12px]">
          <SideTab h="h-[98px]">服务器资源管理器</SideTab>
          <SideTab h="h-[36px]">工具箱</SideTab>
          <SideTab h="h-[37px]">数据源</SideTab>
        </div>
        <div className="w-[1344px] shrink-0 flex flex-col pt-[6px]">
          <div className="h-[22px] shrink-0 flex">
            <div className="w-[1320px] bg-[#364e6f] flex items-center text-[12.5px] text-white whitespace-nowrap">
              <span className="w-[166px] h-full bg-[#4d6082] flex items-center pl-[3px]">
                MainForm.cs [设计]*
                <Pin size={10} className="ml-auto text-[#d8deea]" />
                <X size={12} className="ml-[8px] mr-[6px] text-[#d8deea]" />
              </span>
              {tabs.map(([t, c]) => (
                <span key={t} className={c}>{t}</span>
              ))}
            </div>
            <span className="ml-[15px] mt-[9px] flex"><Tri c="border-t-[#d8deea]" /></span>
          </div>
          <Designer />
          <div className="h-[7px] shrink-0" />
          <Output />
          <div className="mt-px h-[21px] shrink-0 flex">
            <div className="flex bg-[#4d6082] h-full">
              <SubTab px="px-[4px]">错误列表</SubTab>
              <SubTab px="px-[6px]" active>输出</SubTab>
              <SubTab>查找结果 1</SubTab>
              <SubTab>查找符号结果</SubTab>
            </div>
          </div>
        </div>
        <div className="ml-[6px] w-[531px] shrink-0 flex flex-col pt-[6px] pb-[7px] gap-[7px]">
          <Explorer />
          <Props />
        </div>
      </div>
      <div className="h-[25px] shrink-0 bg-[#007acc] flex items-center pl-[4px] pr-[2px] text-[12px] text-white">
        就绪
        <svg width="10" height="10" viewBox="0 0 10 10" fill="#b6d7ee" className="ml-auto mt-[10px]">
          <rect x="8" y="0" width="1.500" height="1.500" /><rect x="5" y="3" width="1.500" height="1.500" /><rect x="8" y="3" width="1.500" height="1.500" />
          <rect x="2" y="6" width="1.500" height="1.500" /><rect x="5" y="6" width="1.500" height="1.500" /><rect x="8" y="6" width="1.500" height="1.500" />
        </svg>
      </div>
      <Taskbar />

      {/* red annotations and desktop widgets lying over the window */}
      <div className="absolute left-[38px] top-[647px] w-[1231px] h-[71px] border-[8px] border-[#ed1c24]" />
      <div className="absolute left-[1596px] top-[580px] w-[300px] h-[179px] border-[5px] border-[#ed1c24]" />
      <svg className="absolute left-0 top-0 pointer-events-none" width="1920" height="1080" fill="none">
        <path d="M878 688 L1628 639" stroke="#ed1c24" strokeWidth="7" strokeLinecap="round" />
        <path d="M1558 634 L1628 639 L1560 655" stroke="#ed1c24" strokeWidth="7" strokeLinecap="round" strokeLinejoin="round" fill="#ed1c24" />
      </svg>
      <div className="absolute left-[1916px] top-[554px] w-[4px] h-[72px] bg-white rounded-l-[2px]" />
      <div className="absolute left-[1910px] top-[710px] w-[8px] h-[57px] rounded-[3px] bg-[#222] border border-[#555] bg-[repeating-linear-gradient(to_bottom,#f5a21f_0,#f5a21f_2px,#222_2px,#222_3px)]" />
    </div>
  );
}
